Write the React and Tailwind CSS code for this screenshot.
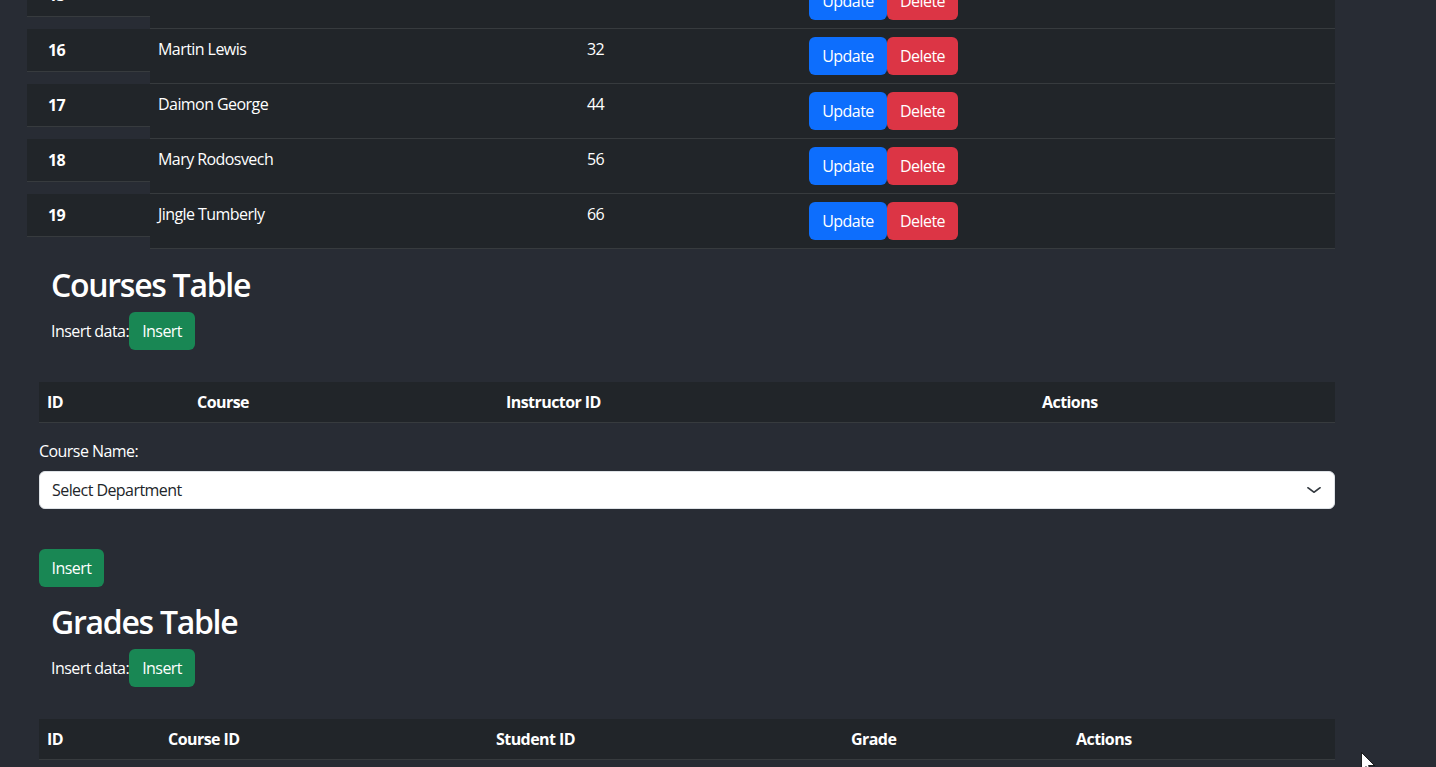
import React from "react";

const students = [
  { id: 15, name: "", age: "" },
  { id: 16, name: "Martin Lewis", age: "32" },
  { id: 17, name: "Daimon George", age: "44" },
  { id: 18, name: "Mary Rodosvech", age: "56" },
  { id: 19, name: "Jingle Tumberly", age: "66" },
];

const FONT = { fontFamily: '"Open Sans", "Noto Sans", sans-serif' };

function Btn({ color, w, children }) {
  return (
    <button
      className={`inline-flex h-[38px] items-center justify-center rounded-[6px] text-[16px] leading-6 text-white ${color} ${w}`}
    >
      {children}
    </button>
  );
}

function StudentRow({ s }) {
  return (
    <div className="flex h-[55px]">
      <div className="w-[123px] flex-none">
        <div className="flex h-[43px] items-center border-b border-[#373b3e] bg-[#212529] pl-[21px] text-[16px] font-bold leading-6">
          {s.id}
        </div>
      </div>
      <div className="flex h-[55px] flex-1 border-b border-[#373b3e] bg-[#212529] text-[16px] leading-6">
        <div className="w-[429px] flex-none px-2 pt-2">{s.name}</div>
        <div className="w-[222px] flex-none px-2 pt-2">{s.age}</div>
        <div className="flex flex-1 p-2">
          <Btn color="bg-[#0d6efd]" w="w-[78px]">Update</Btn>
          <Btn color="bg-[#dc3545]" w="w-[71px]">Delete</Btn>
        </div>
      </div>
    </div>
  );
}

function Heading({ title, className }) {
  return (
    <div className={`pl-[12px] ${className}`}>
      <h2 className="mb-2 text-[32px] font-semibold leading-[38px] tracking-[-0.04em]">
        {title}
      </h2>
      <div className="flex items-baseline text-[16px] leading-6">
        <span>Insert data:</span>
        <Btn color="bg-[#198754]" w="w-[66px]">Insert</Btn>
      </div>
    </div>
  );
}

function HeaderRow({ cols }) {
  return (
    <div className="flex h-[41px] items-center border-b border-[#373b3e] bg-[#212529] text-[16px] font-bold leading-6">
      {cols.map((c, i) => (
        <div key={i} className={`px-2 ${c.w}`}>
          {c.label}
        </div>
      ))}
    </div>
  );
}

export default function App() {
  return (
    <div
      className="relative h-[767px] w-full overflow-hidden bg-[#282c34] tracking-[-0.035em] text-white"
      style={FONT}
    >
      <div className="-mt-[26px]">
        <div className="ml-[27px] w-[1308px]">
          {students.map((s) => (
            <StudentRow key={s.id} s={s} />
          ))}
        </div>

        <div className="ml-[39px] w-[1296px]">
          <Heading title="Courses Table" className="pt-[17px]" />
          <div className="mt-[32px]">
            <HeaderRow
              cols={[
                { label: "ID", w: "w-[150px]" },
                { label: "Course", w: "w-[309px]" },
                { label: "Instructor ID", w: "w-[536px]" },
                { label: "Actions", w: "flex-1" },
              ]}
            />
          </div>
          <div className="mt-[16px] text-[16px] leading-6">Course Name:</div>
          <div className="relative mt-2 flex h-[38px] items-center rounded-[6px] border border-[#dee2e6] bg-white pl-[12px] text-[16px] leading-6 text-[#212529]">
            Select Department
            <svg
              className="absolute right-[12px] top-[12px]"
              width="16"
              height="12"
              viewBox="0 0 16 16"
              preserveAspectRatio="none"
              fill="none"
              stroke="#343a40"
              strokeWidth="2"
              strokeLinecap="round"
              strokeLinejoin="round"
            >
              <path d="m2 5 6 6 6-6" />
            </svg>
          </div>
          <div className="mt-[40px]">
            <Btn color="bg-[#198754]" w="w-[65px]">Insert</Btn>
          </div>
          <Heading title="Grades Table" className="pt-[16px]" />
          <div className="mt-[32px]">
            <HeaderRow
              cols={[
                { label: "ID", w: "w-[121px]" },
                { label: "Course ID", w: "w-[328px]" },
                { label: "Student ID", w: "w-[355px]" },
                { label: "Grade", w: "w-[225px]" },
                { label: "Actions", w: "flex-1" },
              ]}
            />
          </div>
        </div>
      </div>

      <svg
        className="absolute left-[1361px] top-[752px]"
        width="16"
        height="24"
        viewBox="0 0 16 24"
      >
        <path
          d="M0.5 0.5 L0.5 19 L5 14.5 L8 21.5 L10.5 20.5 L7.5 13.5 L13.5 13.5 Z"
          fill="#fff"
          stroke="#000"
          strokeWidth="0.8"
        />
      </svg>
    </div>
  );
}
